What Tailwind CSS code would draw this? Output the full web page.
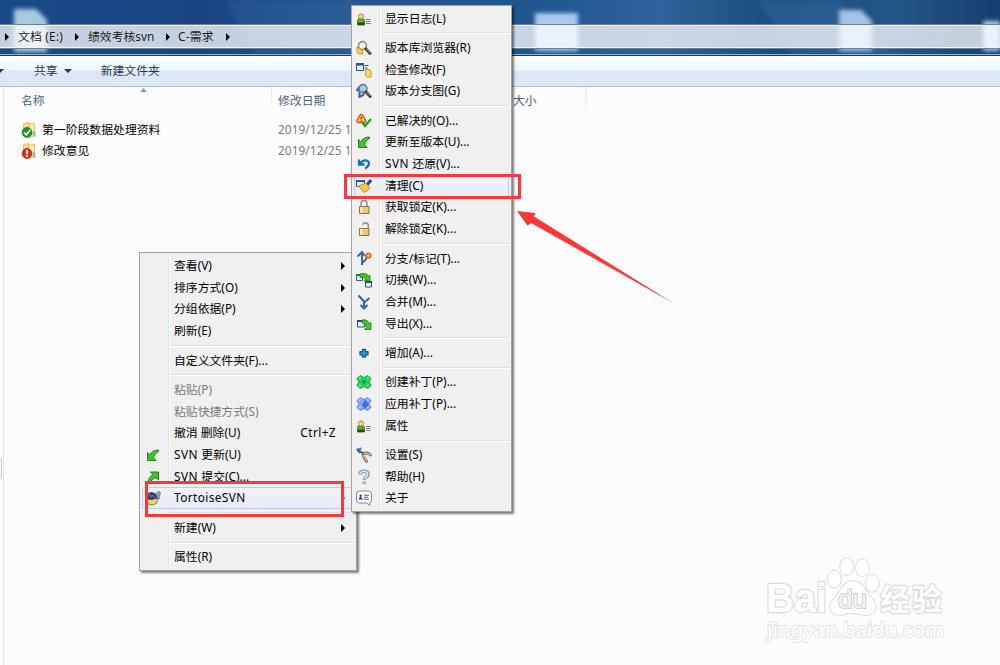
<!DOCTYPE html>
<html lang="zh-CN">
<head>
    <meta charset="UTF-8">
    <meta name="viewport" content="width=device-width, initial-scale=1.0">
    <title>C-需求</title>
    <script src="https://cdn.jsdelivr.net/npm/@tailwindcss/browser@4"></script>
</head>
<body class="relative w-[1000px] h-[665px] overflow-hidden bg-[#fcfcfc] text-[11.85px] leading-none whitespace-nowrap font-['Noto_Sans','Noto_Sans_CJK_SC',sans-serif]">

    <!-- icons -->
    <svg class="hidden">
        <symbol id="i-user" viewBox="0 0 16 16">
            <path d="M1.500 14V9.500q0-1.500 1.500-1.500h4q1.500 0 1.500 1.500V14z" fill="#5fae25" stroke="#2e5d16" stroke-width=".8"/>
            <path d="M2 11.500h6V14H2z" fill="#234712"/>
            <circle cx="5" cy="5.500" r="2.600" fill="#f0d488" stroke="#9b7a2c" stroke-width=".8"/>
            <path d="M10 8.500h4.500M10 10.500h4.500M10 12.500h4.500" stroke="#777"/>
        </symbol>
        <symbol id="i-browse" viewBox="0 0 16 16">
            <path d="M1 7h5.500v7H2.500L1 12z" fill="#f8d34e" stroke="#b78b17" stroke-width=".8"/>
            <circle cx="6.500" cy="5.500" r="4" fill="#e9eef0" stroke="#8d8468" stroke-width="1.300"/>
            <path d="M9.800 8.800l4.200 4.500" stroke="#4a3a24" stroke-width="3" stroke-linecap="round"/>
            <path d="M10.500 8.800l4 4" stroke="#e0b25a" stroke-width="1"/>
        </symbol>
        <symbol id="i-check" viewBox="0 0 16 16">
            <path d="M.500 1.500h7v7h-7z" fill="#e8f0fb" stroke="#28519b"/>
            <path d="M0 1h8v2.500H0z" fill="#28519b"/>
            <path d="M8.500 3.500h4M8.500 6h3" stroke="#28519b"/>
            <path d="M9.500 7.500h3.500l2 1.500v6h-4l-1.500-1.500z" fill="#fbd95c" stroke="#c69a25"/>
        </symbol>
        <symbol id="i-graph" viewBox="0 0 16 16">
            <path d="M3.500 15V5M.500 8l3-4M4 13.500q4-1 4-4" fill="none" stroke="#3d67a8" stroke-width="2.200"/>
            <circle cx="7" cy="5.500" r="4" fill="#a9cbe6" stroke="#62738a" stroke-width="1.400"/>
            <path d="M10 8.800l4.200 4.700" stroke="#40362a" stroke-width="2.800" stroke-linecap="round"/>
            <path d="M10.500 8.800l4 4.200" stroke="#d0a455" stroke-width=".9"/>
        </symbol>
        <symbol id="i-resolve" viewBox="0 0 16 16">
            <path d="M.800 7.500L4 2q1.200-1.200 2.400 0l3.400 5.500q0 2-1.300 2H1.800q-1 0-1-2z" fill="#ffd83a" stroke="#f03a1d" stroke-width="1.300"/>
            <path d="M5.200 3.500v3M5.200 7.300v1.200" stroke="#d81d10" stroke-width="1.300"/>
            <path d="M6 9l3 4 6-7" fill="none" stroke="#16a516" stroke-width="2.200"/>
        </symbol>
        <symbol id="i-update" viewBox="0 0 16 16">
            <path d="M2.500 5.500l2.200 2.200Q7.500 3 13.500 3v1.500Q9.500 6 8.500 10.500l2.500 3H2.500z" fill="#3fc62a" stroke="#17740f" stroke-width=".9" stroke-linejoin="round"/>
        </symbol>
        <symbol id="i-commit" viewBox="0 0 16 16">
            <path d="M5.500 3h8v8l-2.500-2.300Q6.800 9.500 5 14.500H3Q3 8.500 8 5.500z" fill="#3fc62a" stroke="#17740f" stroke-width=".9" stroke-linejoin="round"/>
        </symbol>
        <symbol id="i-revert" viewBox="0 0 16 16">
            <path d="M3 3.500v5h5.500M3.500 8Q6.500 4 10.500 4.500q3.500 1 2 4.800-1 2.200-3.500 3" fill="none" stroke="#1d6eb5" stroke-width="2.300"/>
        </symbol>
        <symbol id="i-clean" viewBox="0 0 16 16">
            <path d="M.500 2.500h8v6h-8z" fill="#e8f0fb" stroke="#28519b"/>
            <path d="M0 2h9v2H0z" fill="#28519b"/>
            <path d="M15 2l-4 5" stroke="#20508f" stroke-width="3.200"/>
            <path d="M2.500 8l7-3 4.500 4.500Q11.500 14 8 14.500z" fill="#f8bd45" stroke="#bf7d16" stroke-width=".8"/>
            <path d="M5 8.500l4 4M7.500 7l4 4" stroke="#ffe39a" stroke-width=".9"/>
        </symbol>
        <symbol id="i-lock" viewBox="0 0 16 16">
            <path d="M5 7.500V5Q5 1.500 8 1.500T11 5v2.500" fill="none" stroke="#8a8a8a" stroke-width="1.400"/>
            <path d="M3.500 7.500h9.500v7H3.500z" fill="#ecc978" stroke="#80683a" stroke-width=".9"/>
            <path d="M5.500 8v6" stroke="#fff2c7" stroke-width="2"/>
        </symbol>
        <symbol id="i-unlock" viewBox="0 0 16 16">
            <path d="M6.500 3.800Q7.500 1.500 10 1.800 12.500 2.300 12.300 5v2.500" fill="none" stroke="#8a8a8a" stroke-width="1.400"/>
            <path d="M3.500 7.500h9.500v7H3.500z" fill="#ecc978" stroke="#80683a" stroke-width=".9"/>
            <path d="M5.500 8v6" stroke="#fff2c7" stroke-width="2"/>
        </symbol>
        <symbol id="i-branch" viewBox="0 0 16 16">
            <path d="M6 15V2.500M1.500 6.500L6 2l3 4M6 12.500q4.500-2 4.500-6" fill="none" stroke="#3c64a6" stroke-width="2"/>
            <circle cx="12.500" cy="5.500" r="2.200" fill="#ffd9a8" stroke="#f2601c" stroke-width="1.800"/>
        </symbol>
        <symbol id="i-switch" viewBox="0 0 16 16">
            <path d="M.500 2.500h6v6h-6z" fill="#e8f0e8" stroke="#28618b"/>
            <path d="M0 2h7v2H0z" fill="#246b5a"/>
            <path d="M9.500 9.500h6v5.500h-6z" fill="#eef4fb" stroke="#244b86"/>
            <path d="M9 9h7v2H9z" fill="#244b86"/>
            <path d="M4 2q7-2 8.500 2.500L14 3v6H8l1.800-2Q8 4.500 4 5.500z" fill="#45c722" stroke="#1b7a10" stroke-width=".8"/>
        </symbol>
        <symbol id="i-merge" viewBox="0 0 16 16">
            <path d="M2.500 1.500L8 7.500v6.500M13.500 4L8 8.500M4.500 11L8 14.500l3.500-3.500" fill="none" stroke="#3c64a6" stroke-width="2.100"/>
        </symbol>
        <symbol id="i-export" viewBox="0 0 16 16">
            <path d="M1.500 4.500h7v6.500h-7z" fill="#e8f0fb" stroke="#244b86"/>
            <path d="M1 4h8v2H1z" fill="#244b86"/>
            <path d="M6 4q6-1 7.200 4L15 6.500v7H8.500l1.800-2Q10 7.500 6 7z" fill="#45c722" stroke="#1b7a10" stroke-width=".8"/>
        </symbol>
        <symbol id="i-add" viewBox="0 0 16 16">
            <path d="M6.500 4.500h3v2.200H12v3H9.500V12h-3V9.700H4v-3h2.500z" fill="#2b9fd2" stroke="#145f95" stroke-width="1.400" stroke-linejoin="round"/>
        </symbol>
        <symbol id="i-patch-new" viewBox="0 0 16 16">
            <path d="M4 1.500l4 2 4-2 3 3-2 3.500 2 3.500-3 3-4-2-4 2-3-3L3 8 1 4.500z" fill="#21d15a" stroke="#159d40" stroke-width=".9" stroke-linejoin="round"/>
            <path d="M5.500 8L8 5.500 10.500 8 8 10.500z" fill="#13a345"/>
            <path d="M3 4.500l1.500-1M11 4.500l1.500-1M3 12l1.500-1M11 12l1.500-1" stroke="#9df5b4" stroke-width="1.200"/>
        </symbol>
        <symbol id="i-patch-apply" viewBox="0 0 16 16">
            <path d="M4 1.500l4 2 4-2 3 3-2 3.500 2 3.500-3 3-4-2-4 2-3-3L3 8 1 4.500z" fill="#85a6f3" stroke="#5b7fd6" stroke-width=".9" stroke-linejoin="round"/>
            <path d="M9 4l4 4-4 5-3-4z" fill="#3e6be6"/>
            <path d="M3 4.500l1.500-1M11 4.500l1.500-1M3 12l1.500-1M11 12l1.500-1" stroke="#c9d8fd" stroke-width="1.200"/>
        </symbol>
        <symbol id="i-settings" viewBox="0 0 16 16">
            <path d="M7 6.800Q11 5 14.300 8M7 6.800q1 4.700 3.500 7.500" fill="none" stroke="#77684c" stroke-width="3" stroke-linecap="round"/>
            <path d="M7.500 6.800Q11 5.300 14 8M7.500 7.300q1 4 3 6.800" fill="none" stroke="#d3c096" stroke-width="1.600" stroke-linecap="round"/>
            <path d="M1 1.500l3 4.500M5 1L1.500 4.500M4 4l3.500 3" stroke="#4d5f86" stroke-width="2"/>
        </symbol>
        <symbol id="i-help" viewBox="0 0 16 16">
            <path d="M4 5.500Q4 2.200 8 2.200T12 5.300q0 2-2.500 3.200Q8.300 9.200 8.300 11M8.300 12.500v2.500" fill="none" stroke="#7890a6" stroke-width="3.400"/>
            <path d="M4.200 5Q4.500 2.300 8 2.300T11.800 5.300q0 1.700-2.300 2.900Q8.300 8.800 8.300 10.500M8.300 13v1.500" fill="none" stroke="#dce7f0" stroke-width="1.600"/>
        </symbol>
        <symbol id="i-about" viewBox="0 0 16 16">
            <path d="M3.500 1h9q3 0 3 3v6q0 2.500-2 3l.500 2.500L10.500 13h-7q-3 0-3-3V4q0-3 3-3z" fill="#fff" stroke="#888"/>
            <circle cx="4.700" cy="5.700" r="1.200" fill="#34446c"/>
            <path d="M2.700 9.500q0-2.500 2-2.500t2 2.500z" fill="#34446c"/>
            <path d="M8 5.200h5M8 7.200h4M8 9.200h5" stroke="#4e5d86" stroke-width="1.100"/>
        </symbol>
        <symbol id="i-tortoise" viewBox="0 0 16 16">
            <path d="M1.500 8.500h11l-1 5q-4 2.500-8.500.500z" fill="#f0d470" stroke="#8c6b1f" stroke-width=".9"/>
            <path d="M1 8.500Q1.500 2.500 7 2.500q4.500.500 5 5-5 3.500-11 1z" fill="#37477c" stroke="#1e2a50" stroke-width=".8"/>
            <path d="M4 4.500l1.500 2 2.500-1 1.500 1.500" fill="none" stroke="#8193c6" stroke-width=".8"/>
            <path d="M12 8.500V5q-1-3 1.500-3.500 2.500.300 1.500 3-1 1.500-1 4.500z" fill="#a4c4cf" stroke="#31616e" stroke-width=".9"/>
        </symbol>
        <symbol id="i-folder" viewBox="0 0 16 16">
            <path d="M2.500 1.500L8 .500v14l-5.500-1z" fill="#f3dd8c" stroke="#d7bb62" stroke-width=".8"/>
            <path d="M8 2l5.500-1v13L8 15.500z" fill="#fae9a8" stroke="#d7bb62" stroke-width=".8"/>
            <path d="M12 9.500l2.500-.500v5.500H12z" fill="#8dbbd0"/>
        </symbol>
    </svg>

    <!-- glass title area with the address bar -->
    <header class="relative h-[56px] overflow-hidden bg-[linear-gradient(90deg,#1b4a89,#184582_20%,#245590_35%,#1f558f_52%,#2d629a_66%,#184b80_78%,#255688_90%,#143e70)] flex flex-col pt-[24px]">
        <svg class="absolute left-0 top-0 blur-[3px]" width="1000" height="56" viewBox="0 0 1000 56">
            <path d="M220-10h140v76H262z" fill="#3f74ab" opacity=".25"/>
            <path d="M752-10h75l80 76h-110z" fill="#3d70a5" opacity=".4"/>
        </svg>
        <svg class="absolute left-0 top-0 blur-[2px]" width="1000" height="56" viewBox="0 0 1000 56">
            <path d="M14 9h22l11 11v32H14z" fill="#a9c9df"/>
            <path d="M535 13h43v38h-43z" fill="#a9cbee"/>
            <path d="M839 10h22l11 11v30h-33z" fill="#a3c3e4"/>
            <path d="M983 21h20v30h-20z" fill="#a9cbee"/>
        </svg>
        <div class="relative h-[25px] shrink-0 border-y border-[#71808f] bg-white/75 shadow-[inset_0_1px_0_#e8edf3,inset_0_-1px_0_#f1f5f9]">
            <div class="h-full flex items-center text-[#1c1c1c]">
                <svg class="ml-[5px] w-[4px] h-[8px]" viewBox="0 0 4 8"><path d="M0 0l4 4-4 4z"/></svg>
                <span class="ml-[9px] w-[46px] tracking-[0.2px]">文档 (E:)</span>
                <svg class="ml-[11px] w-[4px] h-[8px]" viewBox="0 0 4 8"><path d="M0 0l4 4-4 4z"/></svg>
                <span class="ml-[9px] w-[67px]">绩效考核svn</span>
                <svg class="ml-[11px] w-[4px] h-[8px]" viewBox="0 0 4 8"><path d="M0 0l4 4-4 4z"/></svg>
                <span class="ml-[8px] w-[37px] tracking-[0.2px]">C-需求</span>
                <svg class="ml-[11px] w-[4px] h-[8px]" viewBox="0 0 4 8"><path d="M0 0l4 4-4 4z"/></svg>
            </div>
        </div>
        <div class="relative mt-auto h-[2px] border-t border-[#8fb4d8] bg-[#1f3c5c]"></div>
    </header>

    <!-- command bar -->
    <div class="h-[31px] border-b border-[#afbfd3] flex items-center text-[#1e395b] bg-[linear-gradient(#fdfeff,#ecf4fc_48%,#dce6f4_50%,#dce7f5)]">
        <svg class="w-[4px] h-[4px]" viewBox="0 0 4 4"><path d="M0 0h4L0 4z" fill="#1e395b"/></svg>
        <span class="ml-[30px]">共享</span>
        <svg class="ml-[6px] w-[8px] h-[4px]" viewBox="0 0 8 4"><path d="M0 0h8L4 4z" fill="#1e395b"/></svg>
        <span class="ml-[29px]">新建文件夹</span>
    </div>

    <!-- file list -->
    <main class="relative h-[578px] flex">
        <div class="w-[3px] bg-[#fdfdfd]"></div>
        <div class="w-px bg-[#d6e5f5]"></div>
        <div class="grow">
            <div class="h-[27px] flex items-center text-[#4c607a]">
                <div class="relative w-[267px] h-full pl-[17px] flex items-center">名称
                    <svg class="absolute left-[136px] top-[1px] w-[7px] h-[4px]" viewBox="0 0 7 4"><path d="M0 4l3.500-4L7 4z" fill="#6d9fc0"/></svg>
                </div>
                <div class="w-px h-full bg-linear-to-b from-[#dbe7f4] to-[#fcfcfc]"></div>
                <div class="w-[236px] pl-[6px]">修改日期</div>
                <div class="w-[77px] pl-[5px]">大小</div>
                <div class="w-[2px] h-full bg-linear-to-b from-[#e4edf8] to-[#fcfcfc]"></div>
            </div>
            <div class="mt-[5px] h-[21px] flex items-center">
                <svg class="ml-[17px] w-[16px] h-[16px]" viewBox="0 0 16 16">
                    <use href="#i-folder"/>
                    <circle cx="6" cy="10.500" r="5" fill="#27912a" stroke="#136417" stroke-width=".6"/>
                    <path d="M3 10.500l2.300 2.300L9.300 8" fill="none" stroke="#fff" stroke-width="1.700"/>
                </svg>
                <span class="ml-[5px] w-[236px] text-black">第一阶段数据处理资料</span>
                <span class="text-[#7a7a7a] tracking-[0.06px]">2019/12/25 15:20</span>
            </div>
            <div class="h-[21px] flex items-center">
                <svg class="ml-[17px] w-[16px] h-[16px]" viewBox="0 0 16 16">
                    <use href="#i-folder"/>
                    <circle cx="6" cy="10.500" r="5" fill="#d33420" stroke="#9b1b10" stroke-width=".6"/>
                    <path d="M6 7.300v4M6 12.300v1.600" stroke="#fff" stroke-width="1.800"/>
                </svg>
                <span class="ml-[5px] w-[236px] text-black">修改意见</span>
                <span class="text-[#7a7a7a] tracking-[0.06px]">2019/12/25 15:20</span>
            </div>
        </div>
        <div class="absolute -left-[3px] top-[371px] w-[5px] h-[21px] rounded-sm border border-[#c9c9c9] bg-[#f6f6f6]"></div>
    </main>

    <!-- context menus -->
    <div id="folderMenu" class="absolute left-[139px] top-[252px] w-[218px] h-[319px] pt-[2.2px] border border-[#a2a2a2] bg-[#f0f0f0] shadow-[2px_2px_2px_rgba(0,0,0,0.5)]"></div>
    <div id="svnMenu" class="absolute left-[351px] top-[5px] w-[161px] h-[507px] pt-[1.700px] border border-[#a2a2a2] bg-[#f0f0f0] shadow-[2px_2px_2px_rgba(0,0,0,0.5)]"></div>

    <!-- red marks -->
    <div class="absolute left-[145px] top-[481px] w-[199px] h-[36px] border-3 border-[#fb3838]"></div>
    <div class="absolute left-[344px] top-[174px] w-[177px] h-[25px] border-3 border-[#fb3838]"></div>
    <svg class="absolute left-[505px] top-[200px]" width="180" height="110" viewBox="505 200 180 110">
        <path d="M517 211l18.300 2-1.300 3.500L674 303.500 531 223l-3.300 2.700z" fill="#fb3838"/>
    </svg>

    <!-- watermark -->
    <svg class="absolute left-[750px] top-[545px]" width="220" height="110" viewBox="750 545 220 110">
        <g fill="#fff" stroke="#dcdcdc" stroke-width="2.400" stroke-linejoin="round" paint-order="stroke">
            <text x="766" y="612" font-family="Liberation Sans" font-weight="bold" font-size="40" textLength="61" lengthAdjust="spacingAndGlyphs">Bai</text>
            <path d="M853 581q7 0 12 8t8 11q4 5 2 10t-10 5q-6-2-12-2t-12 2q-8 0-10-5t2-10q3-3 8-11t12-8z" stroke-width="2"/>
            <g stroke-width="2">
                <ellipse cx="834.300" cy="579.300" rx="6.500" ry="8.500"/>
                <ellipse cx="846.700" cy="566.700" rx="6.500" ry="8.500"/>
                <ellipse cx="862.300" cy="567.700" rx="6.500" ry="8.500"/>
                <ellipse cx="872.300" cy="583.300" rx="6.500" ry="8.500"/>
            </g>
            <text x="880" y="610" font-family="Noto Sans CJK SC" font-weight="bold" font-size="30" textLength="62">经验</text>
            <text x="767" y="637" font-family="Noto Sans" font-size="20" font-weight="500" textLength="177" lengthAdjust="spacingAndGlyphs" stroke="#e2e2e2" stroke-width="1.800">jingyan.baidu.com</text>
            <text x="838" y="608" font-family="Liberation Sans" font-size="25" textLength="29" lengthAdjust="spacingAndGlyphs" fill="#f4f4f4" stroke="#cfcfcf" stroke-width="2">du</text>
        </g>
    </svg>

    <script>
        // null is a separator
        const folderItems = [
            { text: "查看(V)", sub: true },
            { text: "排序方式(O)", sub: true },
            { text: "分组依据(P)", sub: true },
            { text: "刷新(E)" },
            null,
            { text: "自定义文件夹(F)..." },
            null,
            { text: "粘贴(P)", disabled: true },
            { text: "粘贴快捷方式(S)", disabled: true },
            { text: "撤消 删除(U)", key: "Ctrl+Z" },
            { text: "SVN 更新(U)", icon: "update" },
            { text: "SVN 提交(C)...", icon: "commit" },
            { text: "TortoiseSVN", icon: "tortoise", sub: true, hot: true },
            null,
            { text: "新建(W)", sub: true },
            null,
            { text: "属性(R)" }
        ];
        const svnItems = [
            { text: "显示日志(L)", icon: "user" },
            null,
            { text: "版本库浏览器(R)", icon: "browse" },
            { text: "检查修改(F)", icon: "check" },
            { text: "版本分支图(G)", icon: "graph" },
            null,
            { text: "已解决的(O)...", icon: "resolve" },
            { text: "更新至版本(U)...", icon: "update" },
            { text: "SVN 还原(V)...", icon: "revert" },
            { text: "清理(C)", icon: "clean", hot: true },
            { text: "获取锁定(K)...", icon: "lock" },
            { text: "解除锁定(K)...", icon: "unlock" },
            null,
            { text: "分支/标记(T)...", icon: "branch" },
            { text: "切换(W)...", icon: "switch" },
            { text: "合并(M)...", icon: "merge" },
            { text: "导出(X)...", icon: "export" },
            null,
            { text: "增加(A)...", icon: "add" },
            null,
            { text: "创建补丁(P)...", icon: "patch-new" },
            { text: "应用补丁(P)...", icon: "patch-apply" },
            { text: "属性", icon: "user" },
            null,
            { text: "设置(S)", icon: "settings" },
            { text: "帮助(H)", icon: "help" },
            { text: "关于", icon: "about" }
        ];

        // latin words are set a little wider than the rest
        function label(text) {
            return text.replace(/[A-Za-z+]{3,} ?/, word => `<span class="tracking-[0.4px]">${word}</span>`);
        }

        function row(item, iconCell) {
            if (!item) {
                return `<div class="h-[7.700px] pt-[3px] pl-[30px] pr-[2px]"><div class="h-[2px] border-t border-[#e0e0e0] bg-white"></div></div>`;
            }
            const hot = item.hot ? "border-[#aecff7] bg-linear-to-b from-[#f0f3f8] to-[#e6edf7]" : "border-transparent";
            const color = item.disabled ? "text-[#7b7b7b]" : "text-black";
            const icon = item.icon ? `<svg class="w-[16px] h-[16px]"><use href="#i-${item.icon}"/></svg>` : "";
            const key = item.key ? `<span class="mr-[17px]">${label(item.key)}</span>` : "";
            const sub = item.sub ? `<svg class="mr-[8px] w-[4px] h-[8px]" viewBox="0 0 4 8"><path d="M0 0l4 4-4 4z"/></svg>` : "";
            return `<div class="relative mx-[2px] h-[21.700px] flex items-center rounded-[2px] border ${hot} ${color}">
                <span class="${iconCell}">${icon}</span>
                <span class="grow">${label(item.text)}</span>${key}${sub}
            </div>`;
        }

        function fill(id, items, gutter, iconCell) {
            document.getElementById(id).innerHTML =
                `<div class="absolute ${gutter} top-[2px] bottom-[2px] w-[2px] border-l border-[#e2e3e3] bg-white"></div>` +
                items.map(item => row(item, iconCell)).join("");
        }

        fill("folderMenu", folderItems, "left-[28px]", "w-[31px] shrink-0 pl-[2px]");
        fill("svnMenu", svnItems, "left-[27px]", "w-[30px] shrink-0 pl-[1px]");
    </script>
</body>
</html>
